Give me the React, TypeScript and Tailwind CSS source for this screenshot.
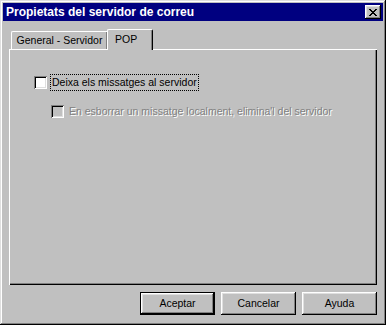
const raised =
  "shadow-[inset_-1px_-1px_#000,inset_1px_1px_#fff,inset_-2px_-2px_#808080,inset_2px_2px_#dfdfdf]";

function CloseGlyph() {
  const rows = ["XX....XX", ".XX..XX.", "..XXXX..", "...XX...", "..XXXX..", ".XX..XX.", "XX....XX"];
  return (
    <svg width="8" height="7" viewBox="0 0 8 7" shapeRendering="crispEdges">
      {rows.flatMap((row, y) =>
        row.split("").map((c, x) => (c === "X" ? <rect key={`${x}-${y}`} x={x} y={y} width="1" height="1" fill="#000" /> : null))
      )}
    </svg>
  );
}

function Checkbox({ disabled }: { disabled?: boolean }) {
  return (
    <span
      className={`block h-[13px] w-[13px] shrink-0 shadow-[inset_1px_1px_#808080,inset_-1px_-1px_#fff,inset_2px_2px_#000,inset_-2px_-2px_#dfdfdf] ${
        disabled ? "bg-[#c0c0c0]" : "bg-white"
      }`}
    />
  );
}

function Button({ label, isDefault }: { label: string; isDefault?: boolean }) {
  return (
    <button
      className={`flex h-[23px] w-[75px] items-center justify-center bg-[#c0c0c0] text-black ${
        isDefault ? "border border-black " : ""
      }${raised}`}
    >
      {label}
    </button>
  );
}

export default function App() {
  return (
    <div
      className="h-[325px] w-[386px] bg-[#c0c0c0] p-[3px] text-[10.5px] leading-[13px] text-black shadow-[inset_-1px_-1px_#000,inset_1px_1px_#dfdfdf,inset_-2px_-2px_#808080,inset_2px_2px_#fff]"
      style={{ fontFamily: '"Liberation Sans", Arial, sans-serif' }}
    >
      <div className="flex h-[18px] items-center justify-between bg-[#000080] pl-[3px] pr-[2px]">
        <span className="text-[12px] font-bold text-white">Propietats del servidor de correu</span>
        <span className={`flex h-[14px] w-[16px] items-center justify-center bg-[#c0c0c0] ${raised}`}>
          <CloseGlyph />
        </span>
      </div>

      <div className="px-[6px]">
        <div className="flex h-[28px] items-end pl-[2px]">
          <div className="flex h-[18px] w-[96px] items-center justify-center rounded-tl-[2px] border-l border-t border-white shadow-[inset_-1px_0_#808080]">
            General - Servidor
          </div>
          <div className="relative z-10 -mb-[1px] flex h-[21px] w-[46px] items-start rounded-tl-[2px] rounded-tr-[2px] border-l border-t border-r border-l-white border-t-white border-r-black bg-[#c0c0c0] pl-[7px] pt-[3px] shadow-[inset_-1px_0_#808080]">
            POP
          </div>
        </div>

        <div className="h-[236px] pl-[25px] pt-[25px] shadow-[inset_1px_1px_#fff,inset_-1px_-1px_#000,inset_-2px_-2px_#808080]">
          <div className="flex items-center gap-[3px]">
            <Checkbox />
            <span className="border border-dotted border-black px-[1px] py-[1px]">Deixa els missatges al servidor</span>
          </div>
          <div className="ml-[17px] mt-[14px] flex items-center gap-[5px]">
            <Checkbox disabled />
            <span className="text-[#808080] [text-shadow:1px_1px_#fff]">
              En esborrar un missatge localment, elimina'l del servidor
            </span>
          </div>
        </div>

        <div className="mt-[7px] flex justify-end gap-[6px]">
          <Button label="Aceptar" isDefault />
          <Button label="Cancelar" />
          <Button label="Ayuda" />
        </div>
      </div>
    </div>
  );
}
